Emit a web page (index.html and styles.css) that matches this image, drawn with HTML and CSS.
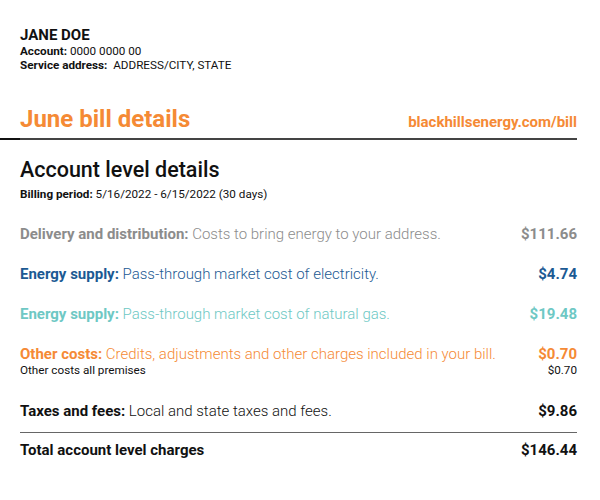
FILE: index.html
```html
<!DOCTYPE html>
<html>
<head>
<meta charset="utf-8">
<link rel="stylesheet" href="styles.css">
</head>
<body>
<div class="page">
  <div class="customer">
    <div class="name">JANE DOE</div>
    <div class="meta"><b>Account:</b> 0000 0000 00</div>
    <div class="meta"><b>Service address:</b>&nbsp; ADDRESS/CITY, STATE</div>
  </div>
  <div class="bill-head">
    <h1 class="title">June bill details</h1>
    <span class="url">blackhillsenergy.com/bill</span>
  </div>
  <div class="divider"></div>
  <h2 class="section">Account level details</h2>
  <div class="period"><b>Billing period:</b> 5/16/2022 - 6/15/2022 (30 days)</div>

  <div class="row gray"><span><b>Delivery and distribution:</b> Costs to bring energy to your address.</span><b>$111.66</b></div>
  <div class="row blue"><span><b>Energy supply:</b> Pass-through market cost of electricity.</span><b>$4.74</b></div>
  <div class="row teal"><span><b>Energy supply:</b> Pass-through market cost of natural gas.</span><b>$19.48</b></div>
  <div class="row orange"><span><b>Other costs:</b> Credits, adjustments and other charges included in your bill.</span><b>$0.70</b></div>
  <div class="sub"><span>Other costs all premises</span><span>$0.70</span></div>
  <div class="row black taxes"><span><b>Taxes and fees:</b> Local and state taxes and fees.</span><b>$9.86</b></div>
  <div class="total"><b>Total account level charges</b><b>$146.44</b></div>
</div>
</body>
</html>
```
FILE: styles.css
```css
html, body { margin: 0; padding: 0; background: #fff; }
body { font-family: Roboto, "Liberation Sans", sans-serif; color: #111; }
b { font-weight: 700; }
.page { width: 557px; padding: 26px 0 0 20px; }
.name { font-weight: 700; font-size: 15px; line-height: 18px; }
.meta { font-size: 11.7px; line-height: 14px; }
.bill-head { display: flex; justify-content: space-between; align-items: baseline; margin-top: 33px; }
.title { margin: 0; font-size: 24px; line-height: 28px; font-weight: 700; color: #f58a35; }
.url { font-size: 15px; font-weight: 700; color: #f58a35; }
.divider { height: 2px; margin: 5px 0 0 -20px; background: linear-gradient(90deg, #111 0 20px, #444 20px); }
.section { margin: 18px 0 0; font-size: 21.5px; line-height: 24px; font-weight: 500; }
.period { font-size: 11.7px; line-height: 14px; margin-top: 5px; }
.row { display: flex; justify-content: space-between; font-size: 15px; font-weight: 300; line-height: 18px; margin-top: 22px; }
.period + .row { margin-top: 24px; }
.gray { color: #8c8c8c; }
.blue { color: #1b5a93; }
.teal { color: #6ec8c4; }
.orange { color: #f58a35; }
.black { color: #111; }
.sub { display: flex; justify-content: space-between; font-size: 11.7px; line-height: 14px; }
.taxes { margin-top: 25px; }
.total { display: flex; justify-content: space-between; font-size: 15px; line-height: 18px; border-top: 1px solid #666; margin-top: 12px; padding-top: 8px; }
```
